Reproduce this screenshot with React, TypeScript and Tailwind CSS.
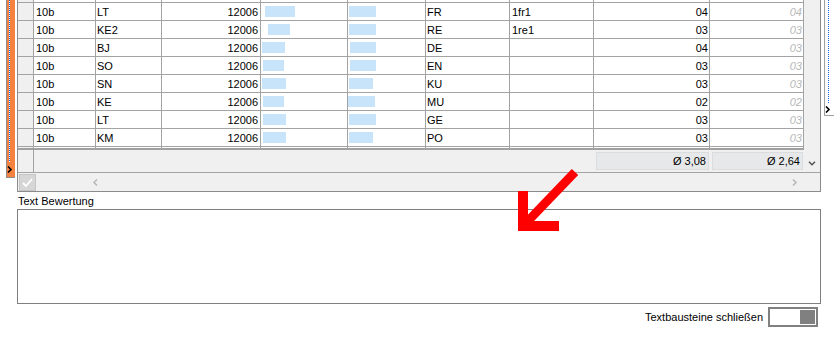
import React from "react";

type Row = {
  a: string;
  b: string;
  c: string;
  d: [number, number];
  e: [number, number];
  f: string;
  g: string;
  h: string;
  i: string;
};

const rows: Row[] = [
  { a: "10b", b: "LT", c: "12006", d: [4, 30], e: [1, 27], f: "FR", g: "1fr1", h: "04", i: "04" },
  { a: "10b", b: "KE2", c: "12006", d: [7, 22], e: [1, 27], f: "RE", g: "1re1", h: "03", i: "03" },
  { a: "10b", b: "BJ", c: "12006", d: [1, 23], e: [2, 26], f: "DE", g: "", h: "04", i: "03" },
  { a: "10b", b: "SO", c: "12006", d: [2, 21], e: [2, 26], f: "EN", g: "", h: "03", i: "03" },
  { a: "10b", b: "SN", c: "12006", d: [1, 24], e: [1, 24], f: "KU", g: "", h: "03", i: "03" },
  { a: "10b", b: "KE", c: "12006", d: [2, 21], e: [0, 27], f: "MU", g: "", h: "02", i: "02" },
  { a: "10b", b: "LT", c: "12006", d: [2, 23], e: [1, 27], f: "GE", g: "", h: "03", i: "03" },
  { a: "10b", b: "KM", c: "12006", d: [2, 23], e: [1, 24], f: "PO", g: "", h: "03", i: "03" },
];

function Blur({ off, w }: { off: number; w: number }) {
  return (
    <div className="h-[11px] bg-[#c7e4fa]" style={{ marginLeft: off, width: w }} />
  );
}

function EmptyCells() {
  return (
    <>
      <div className="w-[16px] h-full border-r border-[#a3a3a3] bg-[#f0f0f0]" />
      <div className="w-[62px] h-full border-r border-[#a3a3a3]" />
      <div className="w-[66px] h-full border-r border-[#a3a3a3]" />
      <div className="w-[99px] h-full border-r border-[#a3a3a3]" />
      <div className="w-[87px] h-full border-r border-[#a3a3a3]" />
      <div className="w-[78px] h-full border-r border-[#a3a3a3]" />
      <div className="w-[84px] h-full border-r border-[#a3a3a3]" />
      <div className="w-[84px] h-full border-r border-[#a3a3a3]" />
      <div className="w-[116px] h-full border-r border-[#a3a3a3]" />
      <div className="w-[94px] h-full border-r border-[#a3a3a3]" />
    </>
  );
}

function GridRow({ r }: { r: Row }) {
  return (
    <div className="flex h-[18px] border-b border-[#a3a3a3] text-black">
      <div className="w-[16px] h-full border-r border-[#a3a3a3] bg-[#f0f0f0]" />
      <div className="w-[62px] h-full border-r border-[#a3a3a3] pl-[2px] pt-[1px] leading-[16px]">{r.a}</div>
      <div className="w-[66px] h-full border-r border-[#a3a3a3] pl-[1px] pt-[1px] leading-[16px]">{r.b}</div>
      <div className="w-[99px] h-full border-r border-[#a3a3a3] pr-[2px] pt-[1px] leading-[16px] text-right">{r.c}</div>
      <div className="w-[87px] h-full border-r border-[#a3a3a3] flex items-center">
        <Blur off={r.d[0]} w={r.d[1]} />
      </div>
      <div className="w-[78px] h-full border-r border-[#a3a3a3] flex items-center">
        <Blur off={r.e[0]} w={r.e[1]} />
      </div>
      <div className="w-[84px] h-full border-r border-[#a3a3a3] pl-[1px] pt-[1px] leading-[16px]">{r.f}</div>
      <div className="w-[84px] h-full border-r border-[#a3a3a3] pl-[2px] pt-[1px] leading-[16px]">{r.g}</div>
      <div className="w-[116px] h-full border-r border-[#a3a3a3] pr-[1px] pt-[1px] leading-[16px] text-right">{r.h}</div>
      <div className="w-[94px] h-full border-r border-[#a3a3a3] pr-[1px] pt-[1px] leading-[16px] text-right italic text-[#b8b8b8]">{r.i}</div>
    </div>
  );
}

export default function App() {
  return (
    <div className="relative w-[834px] h-[345px] overflow-hidden bg-white font-['Liberation_Sans',Arial,sans-serif] text-[11px] leading-[13px] text-black">
      {/* top section */}
      <div className="flex h-[192px]">
        <div className="w-[6px]" />
        {/* left orange strip */}
        <div className="relative w-[9px] h-[178px] border-l border-b border-[#8c8c8c] bg-[#f5823f]">
          <div className="absolute left-[2px] top-0 w-[1px] h-[162px] bg-[repeating-linear-gradient(to_bottom,#2563eb_0px,#2563eb_1px,#ffffff_1px,#ffffff_2px)]" />
          <svg className="absolute left-[0px] top-[166px]" width="6" height="7" viewBox="0 0 6 7">
            <polyline points="1,0.5 4,3.5 1,6.5" fill="none" stroke="#000" strokeWidth="1.6" />
          </svg>
        </div>
        <div className="w-[2px]" />
        {/* grid */}
        <div className="w-[804px] h-[192px] border-l border-r border-b border-[#8c8c8c] flex flex-col">
          <div className="flex h-[172px]">
            <div className="w-[786px] flex flex-col">
              <div className="flex h-[3px] border-b border-[#a3a3a3]">
                <EmptyCells />
              </div>
              {rows.map((r, i) => (
                <GridRow key={i} r={r} />
              ))}
              <div className="flex h-[1px]">
                <EmptyCells />
              </div>
              <div className="h-[2px] bg-[#a0a0a0]" />
              <div className="flex h-[22px] bg-[#f0f0f0]">
                <div className="w-[16px] h-full border-r border-[#a3a3a3]" />
                <div className="w-[560px]" />
                <div className="w-[116px] h-full pt-[2px] pl-[2px] pr-[1px]">
                  <div className="h-[18px] bg-[#e6e8e9] border border-[#dadcdd] text-right pr-[2px] leading-[16px]">Ø 3,08</div>
                </div>
                <div className="w-[94px] h-full pt-[2px] pl-[2px] pr-[1px]">
                  <div className="h-[18px] bg-[#e6e8e9] border border-[#dadcdd] text-right pr-[2px] leading-[16px]">Ø 2,64</div>
                </div>
              </div>
            </div>
            {/* vertical scrollbar */}
            <div className="w-[16px] h-[172px] bg-[#f0f0f0] flex flex-col justify-end items-center pb-[6px]">
              <svg width="8" height="5" viewBox="0 0 8 5">
                <polyline points="1,0.8 4,3.8 7,0.8" fill="none" stroke="#505050" strokeWidth="1.4" />
              </svg>
            </div>
          </div>
          {/* horizontal scrollbar */}
          <div className="h-[19px] border-t border-[#a3a3a3] bg-[#f0f0f0] flex items-start">
            <div className="ml-[1px] mt-[1px] w-[17px] h-[17px] bg-[#d6d6d6] border border-[#c6c6c6] flex items-center justify-center">
              <svg width="11" height="9" viewBox="0 0 11 9">
                <polyline points="1,5 4,8 10,1" fill="none" stroke="#ffffff" strokeWidth="1.8" />
              </svg>
            </div>
            <div className="flex-1 h-full flex items-center justify-between pl-[56px] pr-[22px]">
              <svg width="6" height="7" viewBox="0 0 6 7">
                <polyline points="5,0.5 2,3.5 5,6.5" fill="none" stroke="#b4b4b4" strokeWidth="1.4" />
              </svg>
              <svg width="6" height="7" viewBox="0 0 6 7">
                <polyline points="1,0.5 4,3.5 1,6.5" fill="none" stroke="#b4b4b4" strokeWidth="1.4" />
              </svg>
            </div>
          </div>
        </div>
        <div className="w-[3px]" />
        {/* right collapsed panel */}
        <div className="relative w-[10px] h-[116px] border-l border-b border-[#a0a0a0] bg-white">
          <div className="absolute left-[3px] top-0 w-[1px] h-[104px] bg-[repeating-linear-gradient(to_bottom,#2563eb_0px,#2563eb_1px,#ffffff_1px,#ffffff_2px)]" />
          <svg className="absolute left-[0px] top-[106px]" width="6" height="7" viewBox="0 0 6 7">
            <polyline points="1,0.5 4,3.5 1,6.5" fill="none" stroke="#000" strokeWidth="1.6" />
          </svg>
        </div>
      </div>

      {/* label */}
      <div className="mt-[3px] ml-[18px] h-[13px]">Text Bewertung</div>
      {/* text area */}
      <div className="mt-[1px] ml-[17px] w-[804px] h-[95px] border border-[#7f7f7f] bg-white" />

      {/* bottom row */}
      <div className="mt-[3px] flex items-center justify-end gap-[5px] pr-[16px]">
        <span>Textbausteine schließen</span>
        <div className="w-[50px] h-[20px] border-2 border-[#808080] bg-white flex items-center justify-end pr-[1px]">
          <div className="w-[15px] h-[14px] bg-[#808080]" />
        </div>
      </div>

      {/* red arrow annotation */}
      <svg className="absolute left-0 top-0 pointer-events-none" width="834" height="345" viewBox="0 0 834 345">
        <line x1="575" y1="172" x2="527" y2="222" stroke="#ff0000" strokeWidth="9" />
        <polyline points="523,191 523,226 559,226" fill="none" stroke="#ff0000" strokeWidth="10" strokeLinejoin="miter" />
      </svg>
    </div>
  );
}
